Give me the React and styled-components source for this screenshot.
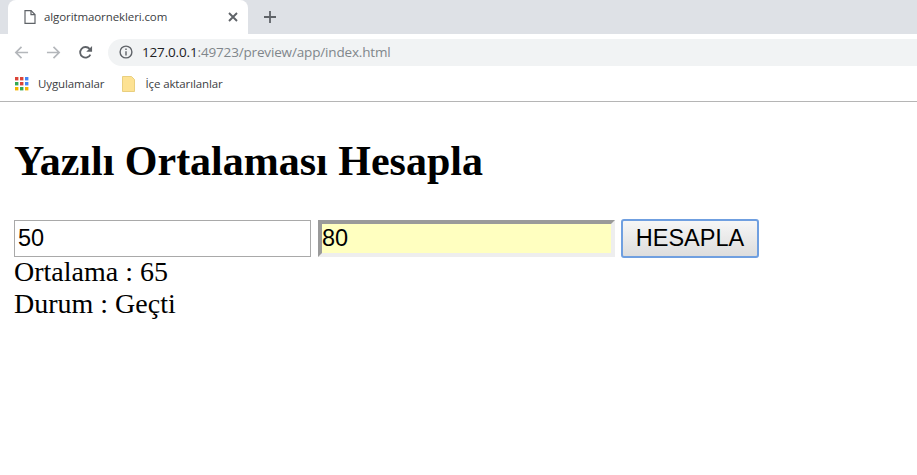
import React from "react";
import styled, { createGlobalStyle } from "styled-components";

const Global = createGlobalStyle`
  html, body { margin: 0; padding: 0; background: #fff; overflow: hidden; }
  body { width: 917px; height: 475px; }
`;

const TabStrip = styled.div`
  height: 34px; background: #dee1e6; display: flex; align-items: flex-end; padding-left: 8px; box-sizing: border-box;
`;
const Tab = styled.div`
  width: 240px; height: 34px; background: #fff; border-radius: 8px 8px 0 0; display: flex; align-items: center;
  padding: 0 9px 0 15px; box-sizing: border-box; margin-right: 10px;
`;
const TabTitle = styled.span`
  font: 11.5px "Open Sans", sans-serif; color: #3c4043; margin-left: 7px; flex: 1; letter-spacing: -0.1px; padding-bottom: 1px;
`;
const NewTab = styled.div`
  width: 24px; height: 34px; display: flex; align-items: center; justify-content: center;
`;
const Toolbar = styled.div`
  height: 34px; background: #fff; display: flex; align-items: center; padding-left: 14px; box-sizing: border-box;
`;
const NavIcon = styled.div`
  width: 32px; height: 22px; display: flex; align-items: center; box-sizing: border-box; margin-top: 2px;
  &:nth-of-type(3) { width: 30px; }
`;
const Address = styled.div`
  flex: 1; height: 27px; background: #f1f3f4; border-radius: 14px 0 0 14px; display: flex; align-items: center;
  padding-left: 11px; margin-top: 2px;
`;
const Url = styled.span`
  font: 13.5px "Open Sans", sans-serif; color: #80868b; margin-left: 9px; letter-spacing: -0.16px; padding-bottom: 1px;
`;
const UrlHost = styled.span`
  color: #202124;
`;
const Bookmarks = styled.div`
  height: 34px; background: #fff; border-bottom: 1px solid #b5b5b5; display: flex; align-items: center; padding: 0 0 2px 15px; box-sizing: border-box;
`;
const BookmarkLabel = styled.span`
  font: 11.5px "Open Sans", sans-serif; color: #3c4043; margin-left: ${p => p.$gap}px; margin-right: ${p => p.$after}px; letter-spacing: -0.12px;
`;
const Page = styled.main`
  padding: 35px 14px 0;
`;
const Title = styled.h1`
  margin: 0 0 34px; font: bold 42px/48px "Liberation Serif", serif; color: #000;
`;
const Form = styled.div`
  display: flex; align-items: center; height: 39px; margin-bottom: -2px;
`;
const PlainInput = styled.input`
  width: 297px; height: 37px; box-sizing: border-box; border: 1px solid #a9a9a9; padding: 0 3px; margin: 0 7px 0 0;
  font: 23.5px "Liberation Sans", sans-serif; color: #000; background: #fff; outline: none;
`;
const InsetInput = styled(PlainInput)`
  border: 4px solid; border-color: #9a9a9a #eeeeee #eeeeee #9a9a9a; background: #ffffc0; padding: 0; margin-right: 6px;
`;
const Button = styled.button`
  width: 138px; height: 39px; box-sizing: border-box; border: 2px solid #6f9fe0; border-radius: 3px; padding: 0;
  background: linear-gradient(#f6f6f6, #dddddd); font: 23.5px "Liberation Sans", sans-serif; color: #000;
`;
const Line = styled.div`
  font: 28px/32px "Liberation Serif", serif; color: #000;
`;

const DocIcon = () => (
  <svg width="14" height="16" viewBox="0 0 14 16" fill="none" stroke="#5f6368" strokeWidth="1.2">
    <path d="M2 1.6h6l4 4v8.8H2z" /><path d="M8 1.6v4h4" />
  </svg>
);
const CloseIcon = () => (
  <svg width="12" height="12" viewBox="0 0 12 12" stroke="#5f6368" strokeWidth="1.9">
    <path d="M2 2l8 8M10 2l-8 8" />
  </svg>
);
const PlusIcon = () => (
  <svg width="14" height="14" viewBox="0 0 14 14" stroke="#5f6368" strokeWidth="1.8">
    <path d="M7 1v12M1 7h12" />
  </svg>
);
const Arrow = ({ flip }) => (
  <svg width="15" height="15" viewBox="0 0 16 16" fill="none" stroke="#b4b7bb" strokeWidth="1.8"
    style={flip ? { transform: "scaleX(-1)" } : undefined}>
    <path d="M15 8H2M8 2L2 8l6 6" />
  </svg>
);
const Reload = () => (
  <svg width="15" height="15" viewBox="0 0 16 16" fill="none">
    <path d="M13.2 10.2A5.7 5.7 0 1 1 12.4 4.2" stroke="#5f6368" strokeWidth="1.9" />
    <path d="M15 1v6.2H8.8z" fill="#5f6368" />
  </svg>
);
const InfoIcon = () => (
  <svg width="14" height="14" viewBox="0 0 14 14" fill="none" stroke="#5f6368" strokeWidth="1.4">
    <circle cx="7" cy="7" r="5.9" /><path d="M7 6.2v4.2M7 3.4v1.6" />
  </svg>
);
const AppsIcon = () => {
  const colors = ["#db4437", "#db4437", "#4285f4", "#34a853", "#db4437", "#4285f4", "#f4b400", "#34a853", "#f4b400"];
  return (
    <svg width="14" height="14" viewBox="0 0 14 14">
      {colors.map((c, i) => (
        <rect key={i} x={(i % 3) * 5} y={Math.floor(i / 3) * 5} width="3.4" height="3.4" fill={c} />
      ))}
    </svg>
  );
};
const FolderIcon = () => (
  <svg width="13" height="16" viewBox="0 0 13 16">
    <path d="M.5.5h9l3 3v12H.5z" fill="#fde293" stroke="#e9cf7f" />
  </svg>
);

export default function App() {
  return (
    <>
      <Global />
      <TabStrip>
        <Tab>
          <DocIcon />
          <TabTitle>algoritmaornekleri.com</TabTitle>
          <CloseIcon />
        </Tab>
        <NewTab><PlusIcon /></NewTab>
      </TabStrip>
      <Toolbar>
        <NavIcon><Arrow /></NavIcon>
        <NavIcon><Arrow flip /></NavIcon>
        <NavIcon><Reload /></NavIcon>
        <Address>
          <InfoIcon />
          <Url><UrlHost>127.0.0.1</UrlHost>:49723/preview/app/index.html</Url>
        </Address>
      </Toolbar>
      <Bookmarks>
        <AppsIcon />
        <BookmarkLabel $gap={9} $after={18}>Uygulamalar</BookmarkLabel>
        <FolderIcon />
        <BookmarkLabel $gap={10} $after={0}>İçe aktarılanlar</BookmarkLabel>
      </Bookmarks>
      <Page>
        <Title>Yazılı Ortalaması Hesapla</Title>
        <Form>
          <PlainInput defaultValue="50" />
          <InsetInput defaultValue="80" />
          <Button>HESAPLA</Button>
        </Form>
        <Line>Ortalama : 65</Line>
        <Line>Durum : Geçti</Line>
      </Page>
    </>
  );
}
